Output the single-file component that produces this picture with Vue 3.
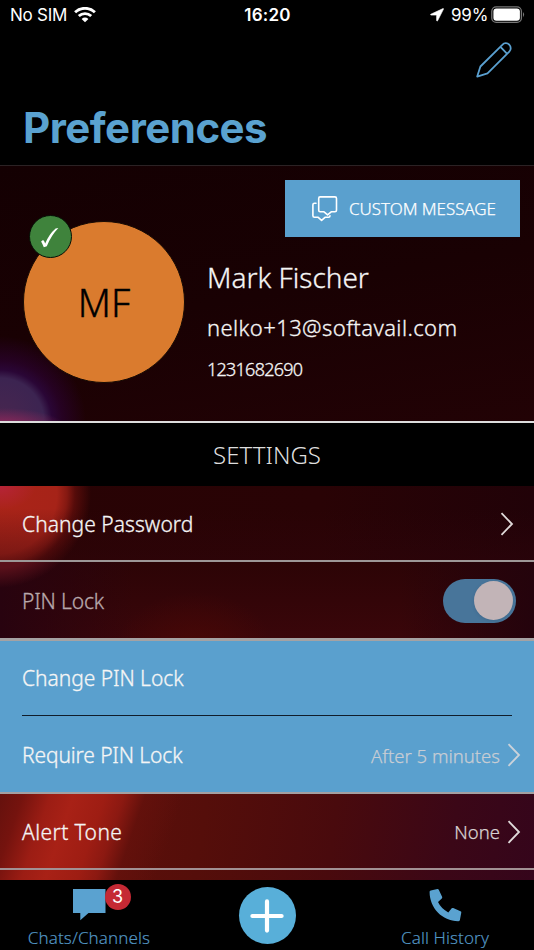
<script setup>
const settings = 'SETTINGS'
</script>

<template>
  <div class="screen">
    <header class="top">
      <div class="status">
        <div class="carrier">
          <span class="nosim">No SIM</span>
          <svg width="22" height="16" viewBox="0 0 22 16" fill="none" stroke="#fff">
            <path d="M1.1 5.3C6.7 0 15.3 0 20.9 5.3" stroke-width="2.9" />
            <path d="M4.8 9C8.3 5.7 13.7 5.7 17.2 9" stroke-width="2.8" />
            <path d="M7.6 11.9Q11 9.1 14.4 11.9L11 15.3Z" fill="#fff" stroke="none" />
          </svg>
        </div>
        <div class="clock">16:20</div>
        <div class="power">
          <svg width="14" height="14" viewBox="0 0 14 14"><path d="M13 .6.8 6.2q-.7.6.2.9H6.6V12.6q.4 1 1 .1L13.5 1.1Q13.6.4 13 .6Z" fill="#fff" stroke="#fff" stroke-width=".6" /></svg>
          <span class="percent">99%</span>
          <svg class="battery" width="34" height="18" viewBox="0 0 34 18">
            <rect x=".8" y=".8" width="29.6" height="15.6" rx="4.4" fill="none" stroke="#777" stroke-width="1.3" />
            <rect x="2.4" y="2.4" width="26.5" height="12.4" rx="3" fill="#fff" />
            <path d="M32 6q2.2 2.6 0 5.2Z" fill="#777" />
          </svg>
        </div>
      </div>
      <svg class="pencil" width="36" height="36" viewBox="0 0 36 36" fill="none" stroke="#5aa0d0" stroke-width="1.8" stroke-linejoin="round">
        <path d="M1.2 34.6 4.4 24.5 26.3 2.8C28.2.8 31.2.6 33.2 2.6S35.2 7.8 33.3 9.7L11.5 31.4ZM24.5 4.9 30.9 11.7" />
      </svg>
      <h1 class="title"><span>Preferences</span></h1>
    </header>

    <main class="content">
      <section class="profile">
        <button class="custom">
          <svg width="26" height="26" viewBox="0 0 26 26" fill="none" stroke="#fff" stroke-width="1.6" stroke-linejoin="round" stroke-linecap="round">
            <path d="M8.1.9H22.9Q24.5.9 24.5 2.5V14.3Q24.5 15.8 22.9 15.8H19.2L15.6 18.9 12 15.8H8.1Q6.7 15.8 6.7 14.3V2.5Q6.7.9 8.1.9Z" />
            <path d="M4 7.2H2.5Q.9 7.2.9 8.8V19.7Q.9 21.3 2.5 21.3H6.2L9.6 24.4 13 21.3H16.5Q18 21.3 18 19.7" />
          </svg>
          <span class="custom-label">CUSTOM MESSAGE</span>
        </button>
        <div class="person">
          <div class="avatar">
            <span class="initials">MF</span>
            <div class="ok">
              <svg width="20" height="22" viewBox="0 0 20 22"><path d="M2.1 14.4 4 13.1Q5.1 13.2 6.2 16.5 10 7.2 16.6 1.5L19.4 1Q12 8.6 7.8 19.3L4.8 20.2Q3.2 16.2 2.1 14.4Z" fill="#fff" /></svg>
            </div>
          </div>
          <div class="details">
            <div class="name"><span>Mark Fischer</span></div>
            <div class="email"><span>nelko+13@softavail.com</span></div>
            <div class="number"><span>1231682690</span></div>
          </div>
        </div>
      </section>

      <h2 class="section"><span>{{ settings }}</span></h2>

      <div class="row password">
        <span class="label l-pass">Change Password</span>
        <svg class="chevron inset" width="14" height="24" viewBox="0 0 14 24"><path d="M1.5 1.2 12 12 1.5 22.8" /></svg>
      </div>
      <div class="row lock">
        <span class="label l-lock">PIN Lock</span>
        <div class="toggle"><div class="knob"></div></div>
      </div>
      <div class="group">
        <div class="row change"><span class="label l-change">Change PIN Lock</span></div>
        <div class="row require">
          <span class="label l-require">Require PIN Lock</span>
          <span class="value v-after">After 5 minutes</span>
          <svg class="chevron dim" width="14" height="24" viewBox="0 0 14 24"><path d="M1.5 1.2 12 12 1.5 22.8" /></svg>
        </div>
      </div>
      <div class="lower">
        <div class="row alert">
          <span class="label l-alert">Alert Tone</span>
          <span class="value v-none">None</span>
          <svg class="chevron" width="14" height="24" viewBox="0 0 14 24"><path d="M1.5 1.2 12 12 1.5 22.8" /></svg>
        </div>
      </div>
    </main>

    <nav class="tabs">
      <div class="tab chats">
        <div class="bubble">
          <svg width="33" height="32" viewBox="0 0 33 32"><path d="M0 0H32.5V24H15.5L7.3 31.3V24H0Z" fill="#5aa2d0" /></svg>
          <span class="badge">3</span>
        </div>
        <span class="tab-label t-chats">Chats/Channels</span>
      </div>
      <button class="plus">
        <svg width="34" height="34" viewBox="0 0 34 34"><path d="M17 2.4V31.6M2.4 17H31.6" stroke="#fff" stroke-width="4.2" stroke-linecap="round" /></svg>
      </button>
      <div class="tab calls">
        <svg width="33" height="33" viewBox="0 0 33 33"><path d="M.6 3Q.4 1.6 1.8 1.4L8.4.1Q9.4 0 9.9.9L13.2 8.1Q13.4 9 12.8 9.6L9 13.1Q12 19.6 19.3 23.4L22.7 19.3Q23.4 18.7 24.2 19L31.5 22.2Q32.5 22.7 32.3 23.6L30.9 30.9Q30.6 32.2 29.2 32.2C13.2 32 .6 19 .6 3Z" fill="#5aa2d0" /></svg>
        <span class="tab-label t-calls">Call History</span>
      </div>
    </nav>
  </div>
</template>

<style>
body { background: #000; }
</style>

<style scoped>
* { box-sizing: border-box; margin: 0; }
.screen { width: 534px; height: 950px; overflow: hidden; background: #000; color: #f5f5f5; font-family: "Noto Sans", sans-serif; display: flex; flex-direction: column; white-space: nowrap; }
.top { height: 166px; flex: none; border-bottom: 1px solid #2b2224; display: flex; flex-direction: column; }
.status { height: 30px; display: grid; grid-template-columns: 1fr auto 1fr; align-items: center; padding: 0 9px 0 10px; font-family: Inter, sans-serif; font-size: 17px; color: #fff; }
.carrier { display: flex; align-items: center; gap: 7px; }
.nosim { width: 57px; letter-spacing: -.25px; }
.clock { font-weight: 600; letter-spacing: .2px; }
.power { display: flex; align-items: center; justify-content: flex-end; }
.percent { margin-left: 7px; width: 38px; letter-spacing: -.2px; }
.battery { margin-left: 2px; margin-right: 0; }
.pencil { align-self: flex-end; margin: 12px 22px 0 0; }
.title { margin: 24px 0 0 23px; height: 52px; font: 700 42px/52px Inter, sans-serif; letter-spacing: -.5px; color: #5aa2d0; }
.content { flex: none; height: 714px; background: #1d0104; }
.profile { height: 257px; border-bottom: 2px solid #ddd; display: flex; flex-direction: column; padding-top: 14px; background:
  radial-gradient(ellipse 62px 20px at 4px 262px, #9a2c61 0%, rgba(142,40,91,.7) 40%, transparent 100%),
  radial-gradient(circle at 0 256px, #49264f 0, #3c2451 44px, #2a0636 52px, rgba(42,2,48,.7) 62px, transparent 86px),
  linear-gradient(170deg, #140002 0%, #190103 50%, #220205 100%); }
.custom { width: 235px; height: 57px; margin-left: 285px; padding: 0 0 0 27px; border: 0; background: #5aa0ce; color: #fff; display: flex; align-items: center; gap: 11px; font: 300 17px "Noto Sans", sans-serif; }
.custom-label { letter-spacing: -.05px; -webkit-text-stroke: .25px currentColor; }
.person { display: flex; padding-left: 23px; margin-top: -16px; }
.avatar { position: relative; width: 162px; height: 162px; border-radius: 50%; background: #da7b2e; border: 1px solid #170b04; display: flex; align-items: center; justify-content: center; color: #000; font-size: 38px; font-weight: 300; -webkit-text-stroke: .4px currentColor; }
.ok { position: absolute; left: 5px; top: -7px; width: 43px; height: 43px; border-radius: 50%; border: 1.5px solid #061006; background: #3f833c; display: flex; align-items: center; justify-content: center; }
.ok svg { margin-right: 3px; margin-top: 2px; }
.details { padding: 39px 0 0 22px; font-weight: 300; -webkit-text-stroke: .3px currentColor; }
.name { height: 35px; font-size: 28px; line-height: 35px; }
.email { margin-top: 16px; height: 32px; font-size: 22px; line-height: 32px; letter-spacing: .4px; }
.number { margin-top: 13px; height: 26px; font-size: 18px; line-height: 26px; letter-spacing: -.75px; }
.section { height: 63px; background: #000; text-align: center; font-size: 24px; line-height: 63px; font-weight: 300; color: #dedede; }
.row { display: flex; align-items: center; padding-left: 22px; }
.label { font-size: 21px; margin-right: auto; font-weight: 300; letter-spacing: .05px; -webkit-text-stroke: .3px currentColor; }
.l-lock { letter-spacing: -.15px; }
.l-change { letter-spacing: -.05px; }
.l-require { letter-spacing: -.12px; }
.l-alert { letter-spacing: .4px; }
.password { height: 76px; padding-top: 2px; border-bottom: 2px solid #9d9797; background:
  linear-gradient(180deg, transparent 30%, rgba(50,5,12,.4)),
  radial-gradient(ellipse 36px 24px at 0 0, #b62438 0, transparent 100%),
  radial-gradient(circle at -3px 8px, #ab2418 0, #a62318 60px, rgba(143,27,19,.9) 70px, rgba(105,15,12,.7) 78px, transparent 94px),
  linear-gradient(90deg, #280304, #290305 60%, #210208); }
.lock { height: 79px; padding-top: 1px; border-bottom: 3px solid #a5a2a3; color: #b8a8ab; background:
  radial-gradient(circle at -3px -68px, #66101a 0, #59101a 74px, transparent 94px),
  radial-gradient(ellipse 80px 60px at 195px 90px, #490806, transparent),
  linear-gradient(90deg, #28030f, transparent 25%, transparent 75%, #24030c),
  linear-gradient(180deg, #2c0406, #3a060a); }
.toggle { width: 73px; height: 44px; border-radius: 22px; background: #48759a; margin-right: 18px; display: flex; align-items: center; justify-content: flex-end; padding: 3px; }
.knob { width: 39px; height: 39px; border-radius: 50%; background: #c2b4b7; box-shadow: 0 1px 3px #34577766; }
.group { height: 153px; border-bottom: 2px solid #a49fa1; background: #5aa0ce; }
.change { height: 75px; margin-right: 22px; margin-left: 22px; padding-left: 0; border-bottom: 1px solid #101d2b; }
.require { height: 76px; padding-top: 2px; }
.value { font-size: 18.5px; margin-right: 7px; color: #c8cdd4; font-weight: 300; letter-spacing: 0; -webkit-text-stroke: .25px currentColor; }
.v-none { color: #d8d1d2; }
.chevron { margin-right: 13px; fill: none; stroke: #e0dada; stroke-width: 1.8; }
.inset { margin-right: 20px; }
.dim { stroke: #cbd2da; }
.lower { height: 86px; background:
  linear-gradient(109deg, #65110d 0, #75130e 22px, #9c1d14 48px, #a82116 70px, #9e1d13 100px, rgba(145,26,18,.9) 118px, rgba(101,17,12,.8) 138px, transparent 175px),
  linear-gradient(98deg, #65110b 0%, #550e0a 38%, #490a0d 62%, #3b0717 84%, #35051b 100%); }
.alert { height: 76px; padding-top: 1px; border-bottom: 2px solid #a29194; }
.tabs { height: 70px; display: grid; grid-template-columns: 178px 178px 178px; }
.tab { display: flex; flex-direction: column; align-items: center; padding-top: 9px; }
.bubble { position: relative; height: 32px; }
.badge { position: absolute; left: 32px; top: -5px; width: 26px; height: 26px; border-radius: 50%; background: #c52934; color: #fff; text-align: center; font: 18px/26px Inter, sans-serif; }
.tab-label { margin-top: 5px; font-size: 17px; line-height: 24px; color: #5296c4; font-weight: 300; letter-spacing: .1px; -webkit-text-stroke: .15px currentColor; }
.t-calls { margin-top: 4px; }
.plus { justify-self: center; margin-top: 7px; width: 57px; height: 57px; border: 0; padding: 0; border-radius: 50%; background: #58afd9; display: flex; align-items: center; justify-content: center; }
</style>
